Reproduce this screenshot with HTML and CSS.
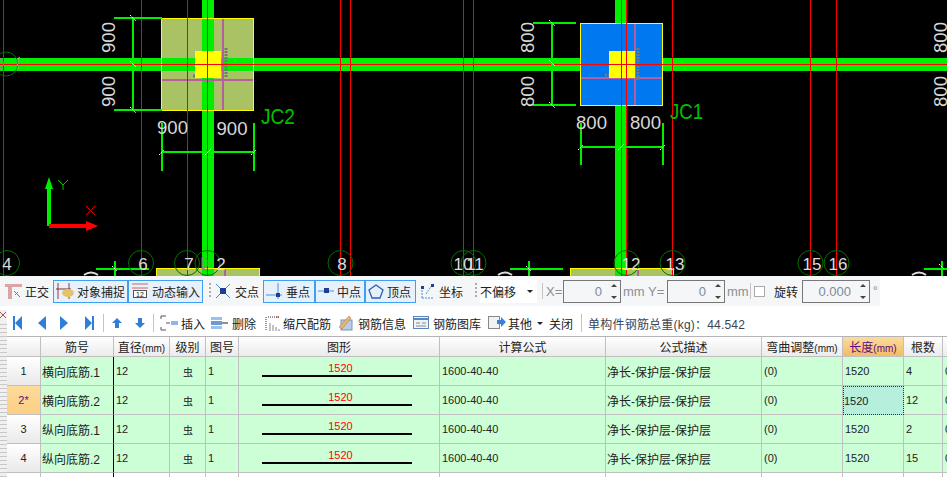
FILE: index.html
```html
<!DOCTYPE html>
<html lang="zh-CN">

<head>
    <meta charset="UTF-8">
    <title>钢筋编辑</title>
    <link rel="stylesheet" href="styles.css">
</head>

<body>

    <!-- 绘图区 -->
    <svg class="cad" width="947" height="276" viewBox="0 0 947 276">
        <rect width="947" height="276" fill="#000" />

        <!-- 梁 -->
        <rect class="beam" x="0" y="58" width="947" height="13" />
        <rect class="beam" x="202" y="0" width="12" height="276" />
        <rect class="beam" x="615" y="0" width="12" height="276" />

        <!-- JC2 -->
        <rect class="pad-olive" x="161.500" y="18.500" width="92" height="92" />
        <rect class="beam" x="162" y="58" width="91" height="13" />
        <rect class="beam" x="202" y="19" width="12" height="91" />
        <path class="rebar" d="M162 80H253M223 19V110" />
        <rect class="core" x="195" y="51" width="26" height="27" />
        <path class="mark" d="M226 48V78M193 76h3" />

        <!-- JC1 -->
        <rect class="pad-blue" x="580.500" y="23.500" width="82" height="82" />
        <path class="rebar" d="M581 78H662M635 24V105" />
        <rect class="core" x="609" y="51" width="26" height="27" />
        <path class="mark" d="M638 48V80M605 75h4" />

        <!-- 基础底部 -->
        <rect class="pad-olive" x="156.500" y="268.500" width="103" height="10" />
        <rect class="beam" x="202" y="269" width="12" height="7" />
        <path class="rebar" d="M225 269V276" />
        <rect class="pad-olive" x="570.500" y="268.500" width="103" height="10" />
        <rect class="beam" x="615" y="269" width="12" height="7" />
        <path class="rebar" d="M638 269V276" />

        <!-- 轴线 -->
        <path class="axis" d="M3.500 0V276M141.500 0V276M187.500 0V276M207.500 0V276M340.500 0V276M350.500 0V276M463.500 0V276M473.500 0V276M621.500 0V276M626.500 0V276M672.500 0V276M810.500 0V276M836.500 0V276M0 64.500H947" />

        <!-- 标注线 -->
        <path class="dim" d="M114 18H162M114 110H162M133 18V110M162 152H254M162 123V171M254 123V171" />
        <path class="dim" d="M533 23H576M533 105H576M552 23V105M581 147H663M581 123V165M663 123V165" />
        <path class="dim" d="M96 269H149M115 261V276M510 269H563M529 261V276M924 269H947M942 261V276" />
        <path class="tick" d="M130 15l6 6M130 61l6 6M130 107l6 6M159 155l5-5M205 155l6-6M251 155l5-5" />
        <path class="tick" d="M549 20l6 6M549 60l6 6M549 102l6 6M578 150l5-5M618 150l6-6M660 150l5-5M112 266l5 5M526 266l5 5M939 264l5 5" />

        <!-- 尺寸文字 -->
        <text class="size" transform="translate(115 53) rotate(-90)" textLength="31" lengthAdjust="spacingAndGlyphs">900</text>
        <text class="size" transform="translate(115 107) rotate(-90)" textLength="31" lengthAdjust="spacingAndGlyphs">900</text>
        <text class="size" x="157" y="134" textLength="31" lengthAdjust="spacingAndGlyphs">900</text>
        <text class="size" x="216.500" y="135" textLength="31" lengthAdjust="spacingAndGlyphs">900</text>
        <text class="size" transform="translate(534 53) rotate(-90)" textLength="31" lengthAdjust="spacingAndGlyphs">800</text>
        <text class="size" transform="translate(534 107) rotate(-90)" textLength="31" lengthAdjust="spacingAndGlyphs">800</text>
        <text class="size" x="576" y="129" textLength="31" lengthAdjust="spacingAndGlyphs">800</text>
        <text class="size" x="630" y="129" textLength="31" lengthAdjust="spacingAndGlyphs">800</text>
        <text class="size" transform="translate(947 53) rotate(-90)" textLength="31" lengthAdjust="spacingAndGlyphs">800</text>
        <text class="size" transform="translate(947 107) rotate(-90)" textLength="31" lengthAdjust="spacingAndGlyphs">800</text>
        <text class="label" x="261" y="124" textLength="34" lengthAdjust="spacingAndGlyphs">JC2</text>
        <text class="label" x="670" y="119" textLength="33" lengthAdjust="spacingAndGlyphs">JC1</text>

        <!-- 轴号 -->
        <g class="ring">
            <circle cx="6" cy="64" r="12" />
            <circle cx="7" cy="263" r="12.500" />
            <circle cx="141" cy="263" r="12.500" />
            <circle cx="187" cy="263" r="12.500" />
            <circle cx="207.500" cy="263" r="12.500" />
            <circle cx="340.500" cy="263" r="12.500" />
            <circle cx="463.500" cy="263" r="12.500" />
            <circle cx="473.500" cy="263" r="12.500" />
            <circle cx="626.500" cy="263" r="12.500" />
            <circle cx="672.500" cy="263" r="12.500" />
            <circle cx="810.500" cy="263" r="12.500" />
            <circle cx="836.500" cy="263" r="12.500" />
        </g>
        <path class="stray" d="M0 58a6 6 0 0 1 0 11M202 257v12a6 6 0 0 0 0-12" />
        <path class="gray-thin" d="M20 57q-3 1-2 4t-1 4q2 1 1 4" />
        <g class="axis-no">
            <text x="7" y="270">4</text>
            <text x="143" y="270">6</text>
            <text x="189" y="270">7</text>
            <text x="221" y="270">2</text>
            <text x="342" y="270">8</text>
            <text x="463" y="270">10</text>
            <text x="475" y="270">11</text>
            <text x="631" y="270">12</text>
            <text x="675" y="270">13</text>
            <text x="812" y="270">15</text>
            <text x="838" y="270">16</text>
        </g>
        <path class="gray-arc" d="M84 275q7-5 14 0M498 275q7-5 14 0M912 275q7-5 14 0" />

        <!-- 坐标系 -->
        <path class="ucs-y" d="M49 226V186" />
        <path class="ucs-y-head" d="M49 177l4 12h-8z" />
        <path class="ucs-x" d="M49 226H90" />
        <path class="ucs-x-head" d="M86 221l12 5-12 5z" />
        <path class="ucs-y-t" d="M58 180l5 5 5-5M63 185v5" />
        <path class="ucs-x-t" d="M86 206l9 9M95 206l-9 9" />
    </svg>

    <!-- 捕捉工具条 -->
    <div class="snapbar">
        <div class="tool w44">
            <svg width="17" height="16" viewBox="0 0 17 16"><path d="M0 1h17v3H7v12H3V4H0z" fill="#dba5a5" /><path d="M9 8l6 6M10 12l3-3" stroke="#777" fill="none" /></svg>
            <span>正交</span>
        </div>
        <div class="tool on w75 first">
            <svg width="18" height="18" viewBox="0 0 18 18"><path d="M2 1v16M13 1v16" stroke="#a33" /><path d="M0 7h15" stroke="#733" /><ellipse cx="12" cy="11" rx="6" ry="4" fill="#e5c36a" /></svg>
            <span>对象捕捉</span>
        </div>
        <div class="tool on w75">
            <svg width="18" height="16" viewBox="0 0 18 16"><path d="M1 1h16M1 5h16" stroke="#c66" fill="none" /><rect x="2.500" y="7.500" width="13" height="7" fill="#fff" stroke="#555" /><text class="ico-num" x="5" y="14">12</text></svg>
            <span>动态输入</span>
        </div>
        <i class="grip"></i>
        <div class="tool w40 ml4">
            <svg width="16" height="16" viewBox="0 0 16 16"><path d="M1 1l14 14M15 1L1 15" stroke="#4a90d9" /><rect x="5" y="5" width="6" height="6" fill="#1c3f94" /></svg>
            <span>交点</span>
        </div>
        <div class="tool on w52 ml4">
            <svg width="17" height="16" viewBox="0 0 17 16"><path d="M0 12h16M12 0v16" stroke="#4a90d9" /><rect x="10" y="10" width="4" height="4" fill="#1c3f94" /></svg>
            <span>垂点</span>
        </div>
        <div class="tool on w50">
            <svg width="16" height="6" viewBox="0 0 16 6"><path d="M0 3h16" stroke="#4a90d9" /><rect x="6" y="0" width="5" height="5" fill="#1c3f94" /></svg>
            <span>中点</span>
        </div>
        <div class="tool on w51">
            <svg width="16" height="15" viewBox="0 0 16 15"><path d="M8 1l7 5-3 8H4L1 6z" fill="none" stroke="#2a62b0" stroke-width="1.300" /></svg>
            <span>顶点</span>
        </div>
        <div class="tool w44 ml4">
            <svg width="16" height="16" viewBox="0 0 16 16"><path d="M2 15V5M2 15h12M6 11l6-9" stroke="#4a90d9" stroke-dasharray="2 1" fill="none" /><rect x="11" y="1" width="3" height="3" fill="#1c3f94" /><rect x="1" y="3" width="3" height="3" fill="#1c3f94" /></svg>
            <span>坐标</span>
        </div>
        <i class="grip gap10"></i>
        <div class="combo">
            <span>不偏移</span>
            <i class="down"></i>
        </div>
        <i class="sep"></i>
        <span class="coord x-label">X=</span>
        <div class="spin w58"><span>0</span><b></b></div>
        <span class="unit">mm</span>
        <span class="coord y-label">Y=</span>
        <div class="spin w58"><span>0</span><b></b></div>
        <span class="unit">mm</span>
        <i class="sep sep-rotate"></i>
        <i class="check"></i>
        <span class="rotate">旋转</span>
        <div class="spin w68"><span>0.000</span><b></b></div>
        <span class="degree">°</span>
    </div>

    <div class="lower">
        <div class="gutter">
            <svg width="7" height="10" viewBox="0 0 7 10"><path d="M0 1l6 6M6 1L0 7" stroke="#a55" /></svg>
        </div>
        <div class="lower-main">

            <!-- 钢筋工具条 -->
            <div class="rebarbar">
                <svg class="nav first-nav" width="10" height="14" viewBox="0 0 10 14"><path d="M1 0h2v14H1zM10 0v14L3 7z" fill="#2f7fd8" /></svg>
                <svg class="nav" width="8" height="14" viewBox="0 0 8 14"><path d="M8 0v14L0 7z" fill="#2f7fd8" /></svg>
                <svg class="nav w-next" width="8" height="14" viewBox="0 0 8 14"><path d="M0 0v14l8-7z" fill="#2f7fd8" /></svg>
                <svg class="nav w-last" width="10" height="14" viewBox="0 0 10 14"><path d="M0 0v14l7-7zM7 0h2v14H7z" fill="#2f7fd8" /></svg>
                <i class="sep bar-sep"></i>
                <svg class="move" width="10" height="10" viewBox="0 0 10 10"><path d="M5 0l5 5H7v5H3V5H0z" fill="#2f7fd8" /></svg>
                <svg class="move mv2" width="10" height="10" viewBox="0 0 10 10"><path d="M5 10l5-5H7V0H3v5H0z" fill="#2f7fd8" /></svg>
                <i class="sep bar-sep"></i>
                <div class="tool gap3 ml6">
                    <svg width="18" height="16" viewBox="0 0 18 16"><path d="M6 1H1v3M1 12v3h5M6 8h4" stroke="#555" fill="none" /><rect x="11" y="6" width="7" height="4" fill="#8db7ea" /></svg>
                    <span>插入</span>
                </div>
                <div class="tool gap3 ml6">
                    <svg width="18" height="14" viewBox="0 0 18 14"><rect x="0" y="1" width="11" height="3" fill="#9cc0ec" /><rect x="0" y="5" width="11" height="4" fill="#6d9ad6" /><rect x="0" y="10" width="11" height="3" fill="#9cc0ec" /><path d="M11 7h6" stroke="#222" /></svg>
                    <span>删除</span>
                </div>
                <div class="tool gap3 ml9">
                    <svg width="15" height="16" viewBox="0 0 15 16"><path d="M1 2v14M3 2h11" stroke="#333" stroke-dasharray="1 1" fill="none" /><path d="M5 8v8M8 10v6M11 12v4M14 14v2" stroke="#888" /><path d="M11 2h3" stroke="#c33" /></svg>
                    <span>缩尺配筋</span>
                </div>
                <div class="tool gap5 ml7">
                    <svg width="15" height="16" viewBox="0 0 15 16"><rect x="3" y="5" width="11" height="10" fill="#b9cde6" stroke="#7d93b0" /><path d="M1 12L11 1l2 2L4 14z" fill="#e5b96a" stroke="#a66" stroke-width=".5" /></svg>
                    <span>钢筋信息</span>
                </div>
                <div class="tool gap3 ml7">
                    <svg width="17" height="14" viewBox="0 0 17 14"><rect x=".5" y=".5" width="15" height="12" fill="#eef3fa" stroke="#5b86bd" /><path d="M1 3h14" stroke="#5b86bd" stroke-width="2" /><path d="M3 7h4M9 7h4M3 10h10" stroke="#888" /></svg>
                    <span>钢筋图库</span>
                </div>
                <div class="tool gap2 ml7">
                    <svg width="18" height="14" viewBox="0 0 18 14"><rect x=".5" y=".5" width="11" height="12" fill="#f2f2f2" stroke="#888" /><path d="M9 4h4V1l5 5-5 5V8H9z" fill="#3c7fd6" /></svg>
                    <span>其他</span>
                </div>
                <i class="down small"></i>
                <span class="close-btn">关闭</span>
                <i class="sep bar-sep"></i>
                <span class="weight">单构件钢筋总重(kg)：44.542</span>
            </div>

            <!-- 钢筋表格 -->
            <div class="grid-box">
                <table class="grid">
                    <colgroup>
                        <col class="c-no">
                        <col class="c-name">
                        <col class="c-dia">
                        <col class="c-grade">
                        <col class="c-fig">
                        <col class="c-shape">
                        <col class="c-formula">
                        <col class="c-desc">
                        <col class="c-bend">
                        <col class="c-len">
                        <col class="c-count">
                        <col class="c-rest">
                    </colgroup>
                    <thead>
                        <tr>
                            <th></th>
                            <th>筋号</th>
                            <th>直径<small>(mm)</small></th>
                            <th>级别</th>
                            <th>图号</th>
                            <th>图形</th>
                            <th>计算公式</th>
                            <th>公式描述</th>
                            <th>弯曲调整<small>(mm)</small></th>
                            <th class="hot">长度<small>(mm)</small></th>
                            <th>根数</th>
                            <th></th>
                        </tr>
                    </thead>
                    <tbody>
                        <tr>
                            <td class="rowhead">1</td>
                            <td class="name">横向底筋.1</td>
                            <td class="num">12</td>
                            <td class="grade">虫</td>
                            <td class="num">1</td>
                            <td class="shape"><div class="shape-val">1520</div><div class="shape-bar"></div></td>
                            <td class="num">1600-40-40</td>
                            <td>净长-保护层-保护层</td>
                            <td class="num">(0)</td>
                            <td class="num">1520</td>
                            <td class="num">4</td>
                            <td class="num">0</td>
                        </tr>
                        <tr>
                            <td class="rowhead cur">2*</td>
                            <td class="name">横向底筋.2</td>
                            <td class="num">12</td>
                            <td class="grade">虫</td>
                            <td class="num">1</td>
                            <td class="shape"><div class="shape-val">1520</div><div class="shape-bar"></div></td>
                            <td class="num">1600-40-40</td>
                            <td>净长-保护层-保护层</td>
                            <td class="num">(0)</td>
                            <td class="num active">1520</td>
                            <td class="num">12</td>
                            <td class="num">0</td>
                        </tr>
                        <tr>
                            <td class="rowhead">3</td>
                            <td class="name">纵向底筋.1</td>
                            <td class="num">12</td>
                            <td class="grade">虫</td>
                            <td class="num">1</td>
                            <td class="shape"><div class="shape-val">1520</div><div class="shape-bar"></div></td>
                            <td class="num">1600-40-40</td>
                            <td>净长-保护层-保护层</td>
                            <td class="num">(0)</td>
                            <td class="num">1520</td>
                            <td class="num">2</td>
                            <td class="num">0</td>
                        </tr>
                        <tr>
                            <td class="rowhead">4</td>
                            <td class="name">纵向底筋.2</td>
                            <td class="num">12</td>
                            <td class="grade">虫</td>
                            <td class="num">1</td>
                            <td class="shape"><div class="shape-val">1520</div><div class="shape-bar"></div></td>
                            <td class="num">1600-40-40</td>
                            <td>净长-保护层-保护层</td>
                            <td class="num">(0)</td>
                            <td class="num">1520</td>
                            <td class="num">15</td>
                            <td class="num">0</td>
                        </tr>
                        <tr class="blank">
                            <td class="rowhead"></td>
                            <td class="name"></td>
                            <td></td>
                            <td></td>
                            <td></td>
                            <td></td>
                            <td></td>
                            <td></td>
                            <td></td>
                            <td></td>
                            <td></td>
                            <td></td>
                        </tr>
                    </tbody>
                </table>
            </div>
        </div>
    </div>

</body>

</html>
```

FILE: styles.css
```css
html,
body {
    margin: 0;
    height: 477px;
    overflow: hidden;
    background-color: #fff;
    font-family: "Liberation Sans", "Noto Sans CJK SC", sans-serif;
    font-size: 12px;
    color: #222;
}

.cad {
    display: block;
}

/* 绘图区 */
.beam { fill: #00ee00; }
.pad-olive { fill: #a8c264; stroke: #ffff00; }
.pad-blue { fill: #0078f0; stroke: #ffff00; }
.core { fill: #ffff00; }
.rebar { stroke: #b65fa0; stroke-width: 2; fill: none; }
.mark { stroke: #777; stroke-width: 3; stroke-dasharray: 2 1; fill: none; }
.axis { stroke: #ff0000; stroke-width: 1; fill: none; }
.dim { stroke: #00ee00; stroke-width: 2; fill: none; }
.tick { stroke: #fff; stroke-width: 1; stroke-dasharray: 2 1; fill: none; }
.ring { stroke: #007000; fill: none; }
.stray { stroke: #b65fa0; fill: none; }
.gray-thin { stroke: #aaa; fill: none; }
.gray-arc { stroke: #ddd; stroke-width: 2; fill: none; }
.size { font-size: 19px; fill: #d8d8d8; }
.label { font-size: 22px; fill: #00c000; }
.axis-no { font-size: 17px; fill: #dcdcdc; text-anchor: middle; }
.ucs-y { stroke: #00ee00; stroke-width: 4; }
.ucs-y-head { fill: #00ee00; }
.ucs-x { stroke: #ff0000; stroke-width: 4; }
.ucs-x-head { fill: #ff0000; }
.ucs-y-t { stroke: #00c000; fill: none; }
.ucs-x-t { stroke: #e00000; fill: none; }
.ico-num { font-size: 7px; fill: #222; }

/* 捕捉工具条 */
.snapbar {
    display: flex;
    align-items: center;
    width: 880px;
    height: 30px;
    margin-bottom: 4px;
    padding-left: 5px;
    box-sizing: border-box;
    background-color: #f5f6f7;
}

.tool {
    display: flex;
    flex: none;
    align-items: center;
    gap: 3px;
    height: 23px;
    box-sizing: border-box;
}

.tool.on {
    border: 1px solid #3f9ff2;
    background-color: #e7f1fb;
    padding-left: 2px;
    gap: 3px;
}

.w44 { width: 44px; }
.w40 { width: 44px; gap: 4px; }
.w75 { width: 75px; }
.w52 { width: 52px; }
.w50 { width: 50px; }
.w51 { width: 51px; }
.first { margin-left: 4px; }
.ml4 { margin-left: 4px; }
.ml6 { margin-left: 6px; }
.ml7 { margin-left: 7px; }
.ml9 { margin-left: 9px; }
.gap2 { gap: 2px; }
.gap3 { gap: 3px; }
.gap5 { gap: 5px; }

.grip {
    flex: none;
    width: 2px;
    height: 16px;
    margin-left: 6px;
    background: repeating-linear-gradient(#aaa 0, #aaa 2px, transparent 2px, transparent 4px);
}

.grip.gap10 {
    margin-left: 11px;
}

.combo {
    display: flex;
    flex: none;
    align-items: center;
    justify-content: space-between;
    width: 57px;
    height: 23px;
    margin-left: 3px;
    padding: 0 4px 0 0;
    box-sizing: border-box;
    background-color: #fff;
}

.down {
    flex: none;
    border: 3px solid transparent;
    border-top: 3px solid #222;
    border-bottom: 0;
    width: 0;
    height: 0;
}

.down.small {
    margin-left: 5px;
}

.sep {
    flex: none;
    width: 1px;
    height: 16px;
    margin-left: 5px;
    background-color: #c4c4c4;
}

.coord,
.unit {
    flex: none;
    color: #8a8f96;
    font-size: 13px;
}

.x-label { margin-left: 3px; width: 17px; }
.y-label { margin-left: 5px; width: 19px; }
.unit { margin-left: 2px; width: 20px; }

.spin {
    position: relative;
    display: flex;
    flex: none;
    align-items: center;
    justify-content: flex-end;
    height: 23px;
    padding-right: 18px;
    box-sizing: border-box;
    border: 1px solid #777;
    color: #7e8a99;
    font-size: 13px;
}

.spin b {
    position: absolute;
    right: 3px;
    top: 3px;
    width: 0;
    border-left: 3px solid transparent;
    border-right: 3px solid transparent;
    border-bottom: 3px solid #444;
}

.spin::after {
    content: "";
    position: absolute;
    right: 3px;
    bottom: 3px;
    width: 0;
    border-left: 3px solid transparent;
    border-right: 3px solid transparent;
    border-top: 3px solid #444;
}

.w58 { width: 58px; }
.w68 { width: 68px; }

.sep-rotate {
    margin-left: 3px;
}

.check {
    flex: none;
    width: 11px;
    height: 11px;
    margin-left: 3px;
    border: 1px solid #aaa;
    box-sizing: border-box;
    background-color: #fff;
}

.rotate {
    flex: none;
    margin-left: 9px;
    margin-right: 4px;
}

.degree {
    flex: none;
    margin-left: 3px;
    color: #7e8a99;
}

/* 下半部分 */
.lower {
    display: flex;
    height: 167px;
}

.gutter {
    flex: none;
    width: 7px;
    background: repeating-linear-gradient(#f0f0f0 0, #f0f0f0 2px, #c8c8c8 2px, #c8c8c8 3px, #f0f0f0 3px, #f0f0f0 4px);
}

.gutter svg {
    display: block;
    margin-top: 1px;
    background-color: #f0f0f0;
}

.lower-main {
    flex: 1;
    min-width: 0;
    display: flex;
    flex-direction: column;
}

.rebarbar {
    display: flex;
    flex: none;
    align-items: center;
    height: 26px;
    box-sizing: border-box;
    padding-left: 5px;
    background-color: #fff;
}

.nav { flex: none; margin-left: 16px; }
.first-nav { margin-left: 0; }
.w-next { margin-left: 14px; }
.w-last { margin-left: 17px; }
.bar-sep { margin-left: 8px; height: 18px; }
.move { flex: none; margin-left: 8px; }
.mv2 { margin-left: 13px; }

.close-btn {
    flex: none;
    margin-left: 6px;
}

.weight {
    flex: none;
    margin-left: 6px;
    letter-spacing: .2px;
    color: #3a4654;
}

.grid-box {
    flex: 1;
    overflow: hidden;
    border-top: 1px solid #b4b4b8;
}

.grid {
    table-layout: fixed;
    width: 966px;
    border-collapse: separate;
    border-spacing: 0;
}

.c-no { width: 34px; }
.c-name { width: 73px; }
.c-dia { width: 56px; }
.c-grade { width: 36px; }
.c-fig { width: 33px; }
.c-shape { width: 201px; }
.c-formula { width: 166px; }
.c-desc { width: 156px; }
.c-bend { width: 81px; }
.c-len { width: 61px; }
.c-count { width: 39px; }
.c-rest { width: 30px; }

.grid th {
    height: 20px;
    padding: 0;
    box-sizing: border-box;
    border-right: 1px solid #c0c0c0;
    border-bottom: 1px solid #c0c0c0;
    background: linear-gradient(#fff, #ebebeb);
    font-weight: normal;
    white-space: nowrap;
    color: #222;
}

.grid th small {
    font-size: 10px;
}

.grid th.hot {
    background: linear-gradient(#fbdc9d, #f1bc66);
    color: #5e0a86;
}

.grid td {
    height: 29px;
    padding: 0 0 0 1px;
    box-sizing: border-box;
    overflow: hidden;
    border-right: 1px solid #c0c0c0;
    border-bottom: 1px solid #c0c0c0;
    background-color: #ccffd6;
    white-space: nowrap;
}

.grid td.num {
    padding-left: 2px;
    font-size: 11px;
}

.grid td.rowhead {
    padding: 0;
    background: linear-gradient(#fff, #e9e9e9);
    text-align: center;
    font-size: 11px;
}

.grid td.rowhead.cur {
    background: linear-gradient(#fddb9a, #fccf84);
    color: #5e0a86;
}

.grid td.name {
    border-right-color: #000;
}

.grid td.grade {
    text-align: center;
    font-size: 10px;
}

.grid td.shape {
    padding: 5px 0 0 0;
    vertical-align: top;
}

.shape-val {
    height: 13px;
    line-height: 13px;
    padding-left: 3px;
    text-align: center;
    color: #f00;
    font-size: 11px;
}

.shape-bar {
    width: 150px;
    height: 2px;
    margin-left: 23px;
    background-color: #000;
}

.grid td.active {
    padding-left: 0;
    border: 1px dotted #402060;
    background-color: #b6f0dc;
}

.blank td,
.grid .blank td.rowhead,
.grid .blank td {
    background: #fff;
}
```
